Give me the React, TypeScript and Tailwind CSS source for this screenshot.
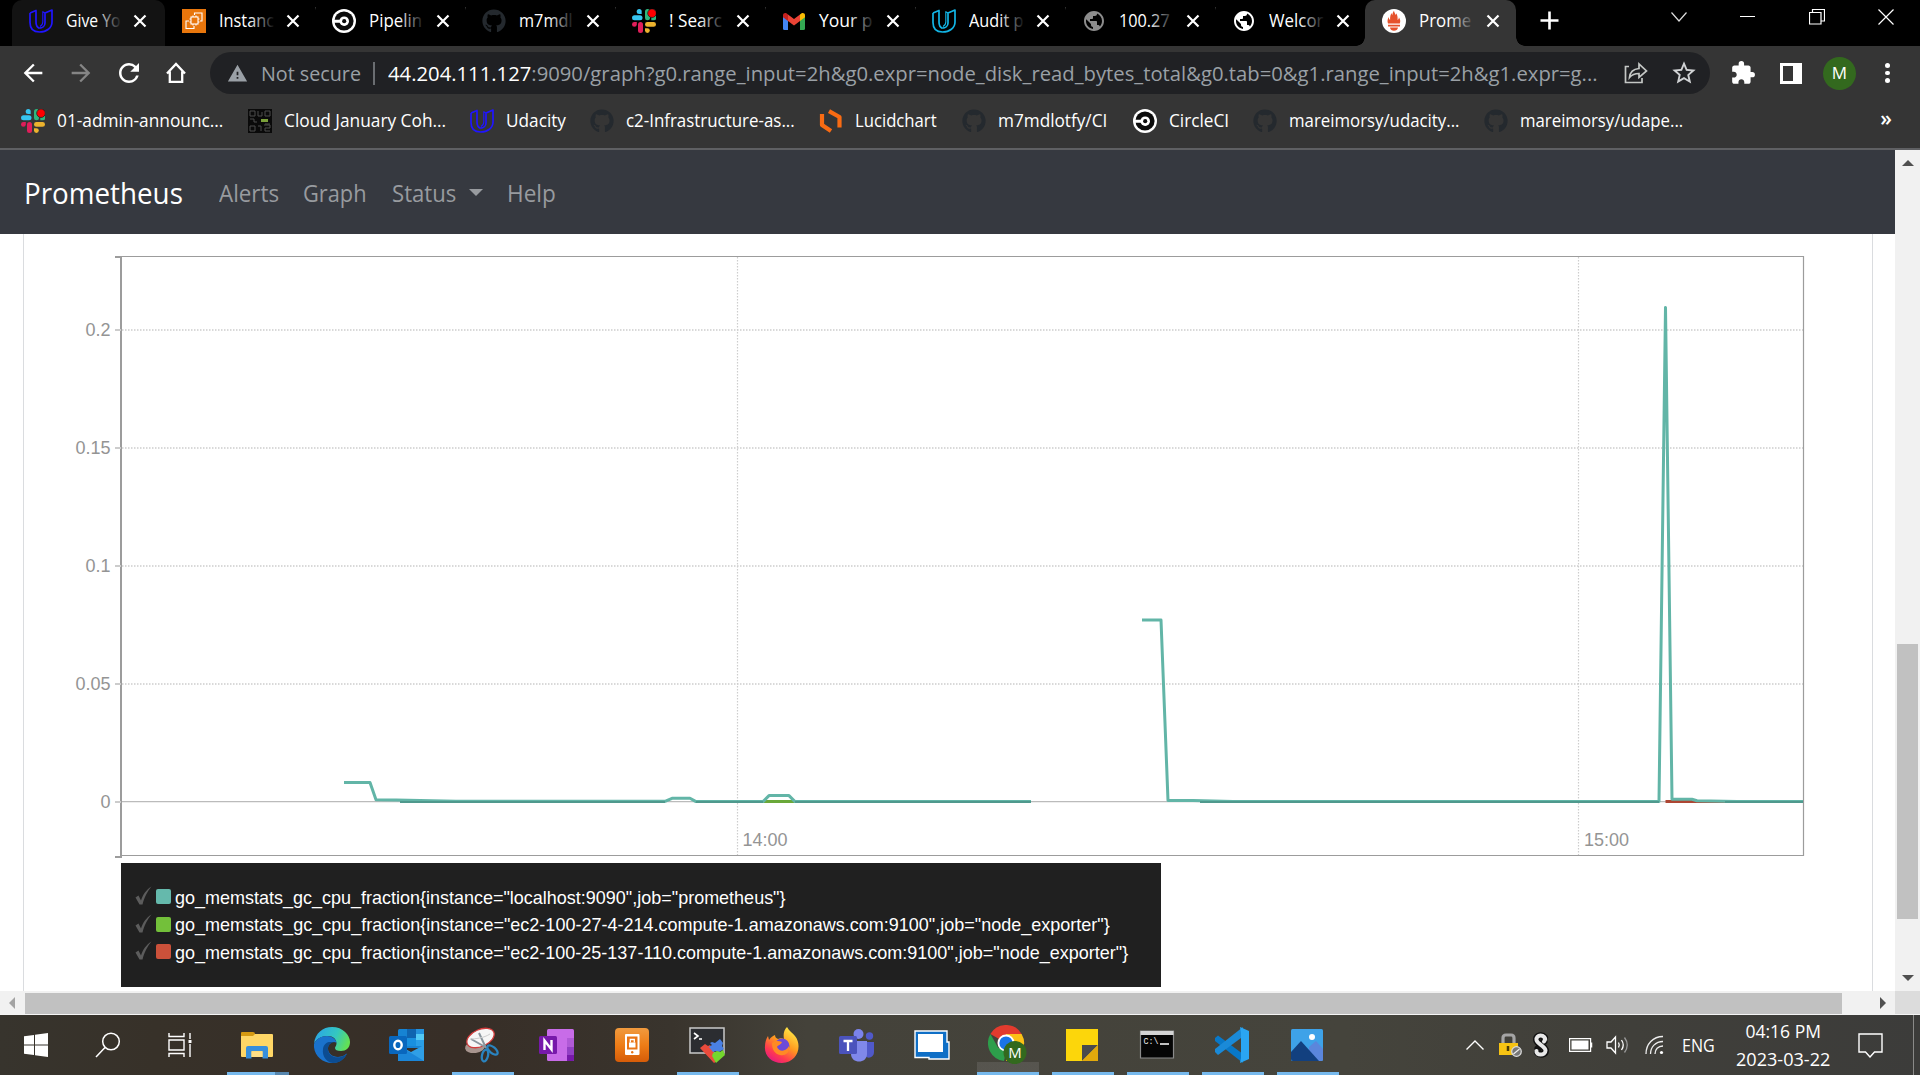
import { useLayoutEffect, useRef, type ReactNode } from "react";
import { FaGithub } from "react-icons/fa";
import { MdArrowBack, MdArrowForward, MdExtension, MdPublic, MdRefresh, MdStarBorder, MdWarning } from "react-icons/md";

/* A single line of text condensed or expanded to the width of its box. */
function Fit({ className, children }: { className: string; children: ReactNode }) {
  const box = useRef<HTMLSpanElement>(null);
  const text = useRef<HTMLSpanElement>(null);
  useLayoutEffect(() => {
    if (!box.current || !text.current) return;
    const ratio = box.current.offsetWidth / text.current.offsetWidth;
    text.current.style.transform = `scaleX(${ratio})`;
  }, []);
  return (
    <span ref={box} className={`block shrink-0 whitespace-nowrap ${className}`}>
      <span ref={text} className="inline-block origin-left">
        {children}
      </span>
    </span>
  );
}

function Udacity({ color }: { color: string }) {
  return (
    <svg className="h-6 w-6" viewBox="0 0 24 24" fill="none" stroke={color} strokeWidth="1.7" strokeLinejoin="round">
      <path d="M1 4 7 1.500V13c0 3 .6 5 3.200 6.200" />
      <path d="M1 4v9.500C1 19.500 4.500 23 10.500 23c7 0 12.500-4 12.500-10V1L16 4v10c0 3-2.500 5.200-5.800 5.200" />
      <path d="M16 4l-2.200-1.300V13c0 2-1 3.500-2.800 4.500" strokeWidth="1.100" />
    </svg>
  );
}

function Slack() {
  return (
    <svg className="h-6 w-6" viewBox="0 0 24 24">
      <g fill="#36c5f0"><path d="M7.200 0a2.500 2.500 0 0 1 2.500 2.500V5H7.200a2.500 2.500 0 0 1 0-5Z" /><rect y="6.300" width="10.500" height="5" rx="2.500" /></g>
      <g fill="#2eb67d"><rect x="13" y="0" width="5" height="11.300" rx="2.500" /><path d="M19.300 11.300V8.800a2.500 2.500 0 1 1 2.400 2.500Z" /></g>
      <g fill="#ecb22e"><rect x="13" y="13" width="11" height="4.800" rx="2.400" /><path d="M13 19.200h2.400a2.400 2.400 0 1 1-2.400 2.400Z" /></g>
      <g fill="#e01e5a"><rect x="6" y="13" width="5" height="11" rx="2.500" /><path d="M4.800 13v2.400A2.400 2.400 0 1 1 2.400 13Z" /></g>
      <circle cx="20" cy="4.200" r="4.300" fill="#f00" stroke="#222" strokeWidth=".8" />
    </svg>
  );
}

function CircleCi() {
  return (
    <svg className="h-6 w-6" viewBox="0 0 24 24">
      <circle cx="12" cy="12" r="12" fill="#fff" />
      <circle cx="12" cy="12" r="9.600" fill="#0c0c0c" />
      <path d="M1 10.700h7.500a4 4 0 1 1 0 3H1Z" fill="#fff" />
      <circle cx="12.200" cy="12.200" r="4.800" fill="#fff" />
      <circle cx="12.200" cy="12.200" r="2.100" fill="#0c0c0c" />
    </svg>
  );
}

function Gmail() {
  return (
    <svg className="h-[17px] w-[22px]" viewBox="0 0 22 17">
      <path d="M0 2v13.500A1.500 1.500 0 0 0 1.500 17H5V7Z" fill="#4285f4" />
      <path d="M22 2v13.500a1.500 1.500 0 0 1-1.500 1.500H17V7Z" fill="#34a853" />
      <path d="M17 1.500V8l5-3.700V2.200C22 .3 19.800-.6 18.300.500Z" fill="#fbbc04" />
      <path d="M0 2.200v2.100L5 8V1.500L3.700.500C2.200-.6 0 .3 0 2.200Z" fill="#c5221f" />
      <path d="M5 1.500V8l6 4.500L17 8V1.500L11 6Z" fill="#ea4335" />
    </svg>
  );
}

function Ec2() {
  return (
    <svg className="h-6 w-6" viewBox="0 0 24 24">
      <rect width="24" height="24" fill="#e8760c" />
      <g fill="none" stroke="#fff" strokeWidth="1.100">
        <rect x="9" y="8" width="7" height="7" />
        <path d="M7 12H4v7.500h8V17M12.500 6V4H20v8h-2M11 8V6.500M14 8V6.500M11 15v1.500M14 15v1.500M9 10H7.500M9 13H7.500M16 10h1.500M16 13h1.500" />
      </g>
    </svg>
  );
}

function Torch() {
  return (
    <svg className="h-6 w-6" viewBox="0 0 24 24">
      <circle cx="12" cy="12" r="12" fill="#fff" />
      <path d="M6 14.500C5 12 5.800 10 6.600 8c.3 1.600.7 2.500 1.500 3C8 7.500 8.500 5.500 9.700 4c0 1 .2 1.700.6 2.200C10.500 4.500 11 3 12 1.800c.2 1.800 1.300 2.700 1.600 4.200.4-.5.500-1 .5-1.700 1.400 1.700 1.700 4.200 1.500 6.700.9-.6 1.200-1.500 1.300-2.800 1.500 2.300 1.700 4.300.9 6.300ZM6 15.700h12v1.800H6ZM8 18.600h8c-.3 2.200-2 3.200-4 3.200s-3.700-1-4-3.200Z" fill="#e6522c" />
    </svg>
  );
}

function Close() {
  return (
    <svg className="h-[14px] w-[14px] shrink-0" viewBox="0 0 14 14" stroke="#fff" strokeWidth="2.200">
      <path d="m1.500 1.500 11 11m0-11-11 11" />
    </svg>
  );
}

const tabs: { icon: ReactNode; label: string; width: string; fade: string }[] = [
  { icon: <Udacity color="#2015ff" />, label: "Give Yo", width: "w-[55px]", fade: "to-[#131313]" },
  { icon: <Ec2 />, label: "Instanc", width: "w-[55px]", fade: "to-black" },
  { icon: <CircleCi />, label: "Pipelin", width: "w-[53px]", fade: "to-black" },
  { icon: <FaGithub className="h-6 w-6 text-[#24292e]" />, label: "m7mdl", width: "w-[54px]", fade: "to-black" },
  { icon: <Slack />, label: "! Searc", width: "w-[53px]", fade: "to-black" },
  { icon: <Gmail />, label: "Your p", width: "w-[53px]", fade: "to-black" },
  { icon: <Udacity color="#12b5e5" />, label: "Audit p", width: "w-[54px]", fade: "to-black" },
  { icon: <MdPublic className="h-[26px] w-[26px] text-[#8c8c8c]" />, label: "100.27", width: "w-[51px]", fade: "to-black" },
  { icon: <MdPublic className="h-[26px] w-[26px] text-white" />, label: "Welcor", width: "w-[54px]", fade: "to-black" },
  { icon: <Torch />, label: "Prome", width: "w-[52px]", fade: "to-[#353535]" },
];

function TabStrip() {
  return (
    <div className="flex h-[46px] bg-black pl-[12px]">
      {tabs.map((tab, i) => {
        const active = i === 9;
        const lit = active ? "bg-[#353535]" : i === 0 ? "bg-[#131313]" : "bg-black";
        return (
          <div key={tab.label} className={`relative flex h-[46px] shrink-0 items-start rounded-t-[10px] pt-2 pl-[18px] ${i === 0 ? "w-[153px]" : active ? "w-[151px]" : "w-[150px]"} ${lit}`}>
            <div className="-ml-px flex h-[26px] w-[24px] shrink-0 items-center justify-center">{tab.icon}</div>
            <div className="relative ml-[13px] h-[26px] w-[56px] shrink-0 text-[17.500px] leading-[25px] text-white">
              <Fit className={tab.width}>{tab.label}</Fit>
              <div className={`absolute top-0 right-0 h-full w-[26px] bg-gradient-to-r from-transparent ${tab.fade}`} />
            </div>
            <div className="ml-[11px] flex h-[25px] items-center"><Close /></div>
            {i > 0 && i < 8 ? <div className="absolute top-[7px] right-0 h-[29px] w-px translate-x-px bg-[#555]" /> : null}
            {active && (
              <>
                <div className="absolute bottom-0 -left-[9px] h-[9px] w-[9px] bg-[radial-gradient(circle_at_0_0,#000_8.500px,#353535_9px)]" />
                <div className="absolute -right-[9px] bottom-0 h-[9px] w-[9px] bg-[radial-gradient(circle_at_100%_0,#000_8.500px,#353535_9px)]" />
              </>
            )}
          </div>
        );
      })}
      <svg className="mt-[11px] ml-[24px] h-[19px] w-[19px]" viewBox="0 0 19 19" stroke="#fff" strokeWidth="2.600"><path d="M9.500.500v18M.500 9.500h18" /></svg>
      <div className="ml-auto flex h-[33px] items-center">
        <div className="flex w-[68px] justify-center"><svg className="h-[10px] w-[16px]" viewBox="0 0 16 10" fill="none" stroke="#ddd" strokeWidth="1.200"><path d="m.500.500 7.500 8.500L15.500.500" /></svg></div>
        <div className="flex w-[69px] justify-center"><div className="h-px w-[15px] bg-white" /></div>
        <div className="flex w-[69px] justify-center"><svg className="h-[16px] w-[16px]" viewBox="0 0 16 16" fill="none" stroke="#fff" strokeWidth="1.200"><path d="M.500 3.500h11.500v11.500H.500ZM3.500 3.500v-3h12v11.500h-3.500" /></svg></div>
        <div className="flex w-[69px] justify-center"><svg className="h-[16px] w-[16px]" viewBox="0 0 16 16" stroke="#fff" strokeWidth="1.200"><path d="m.500.500 15 15m0-15-15 15" /></svg></div>
      </div>
    </div>
  );
}

function Toolbar() {
  return (
    <div className="flex h-[54px] items-center pl-[21px]">
      <MdArrowBack className="mr-[20px] -ml-[2px] h-[28px] w-[28px] text-white" />
      <MdArrowForward className="mr-[19px] h-[28px] w-[28px] text-[#858585]" />
      <MdRefresh className="mr-[22px] h-[30px] w-[30px] text-white" />
      <svg className="h-[22px] w-[20px]" viewBox="0 0 20 22" fill="none" stroke="#fff" strokeWidth="2.300"><path d="M1 11.500 10 2l9 9.500M3.800 9.500v10.300h12.400V9.500" /></svg>
      <div className="ml-[24px] flex h-[42px] w-[1500px] shrink-0 items-center rounded-full bg-[#202124] pl-[17px] text-[20.500px] text-[#9aa0a6]">
        <MdWarning className="h-[21px] w-[21px] shrink-0 text-[#9aa0a6]" />
        <Fit className="ml-[13px] w-[100px]">Not secure</Fit>
        <div className="ml-[12px] h-[23px] w-[1.500px] bg-[#6a6d71]" />
        <Fit className="ml-[13px] w-[1210px]">
          <span className="text-white">44.204.111.127</span>:9090/graph?g0.range_input=2h&amp;g0.expr=node_disk_read_bytes_total&amp;g0.tab=0&amp;g1.range_input=2h&amp;g1.expr=g...
        </Fit>
        <svg className="ml-[26px] h-[22px] w-[24px] shrink-0" viewBox="0 0 24 22" fill="none" stroke="#c4c7c5" strokeWidth="1.700"><path d="M5 4.500H1.500v16H18V16M5.500 15.500C6 10 9 7 15 6.500V2l7.500 7-7.500 6.500V11.500C11 11.500 8 12.500 5.500 15.500Z" /></svg>
        <MdStarBorder className="ml-[22px] h-[28px] w-[28px] shrink-0 text-[#d0d2d4]" />
      </div>
      <MdExtension className="ml-[20px] h-[26px] w-[26px] text-white" />
      <div className="ml-[24px] h-[21px] w-[22px] border-[3px] border-r-[9px] border-white" />
      <div className="ml-[21px] flex h-[33px] w-[33px] items-center justify-center rounded-full bg-[#33691e] text-[17px] text-white">M</div>
      <div className="ml-[29px] flex flex-col gap-[3px]">
        <div className="h-[4.500px] w-[4.500px] rounded-full bg-white" />
        <div className="h-[4.500px] w-[4.500px] rounded-full bg-white" />
        <div className="h-[4.500px] w-[4.500px] rounded-full bg-white" />
      </div>
    </div>
  );
}

function Qr() {
  return (
    <svg className="h-6 w-6" viewBox="0 0 24 24">
      <rect width="24" height="24" fill="#0a0a0a" />
      <g fill="none" stroke="#4c4c4c" strokeWidth="1"><path d="M2 2h5v5H2ZM17 2h5v5h-5ZM2 17h5v5H2ZM10 2v5h4V3M2 10h4v3h3M10 17h3v5M16 16h6v3h-5v3h5M17 15h5" /></g>
      <rect x="13" y="10" width="7" height="3" fill="#7ba03a" />
    </svg>
  );
}

function Lucid() {
  return (
    <svg className="h-6 w-[24px]" viewBox="0 0 24 24" fill="none" stroke="#f96b13" strokeWidth="4.200" strokeLinejoin="round">
      <path d="M3 5v11l9 6M10 2.200 20.500 8v10.500" />
    </svg>
  );
}

const gh = <FaGithub className="h-6 w-6 text-[#24292e]" />;
const bookmarks: { icon: ReactNode; label: string; width: string }[] = [
  { icon: <Slack />, label: "01-admin-announc...", width: "w-[166px] mr-[25px]" },
  { icon: <Qr />, label: "Cloud January Coh...", width: "w-[162px] mr-[24px]" },
  { icon: <Udacity color="#2015ff" />, label: "Udacity", width: "w-[60px] mr-[24px]" },
  { icon: gh, label: "c2-Infrastructure-as...", width: "w-[169px] mr-[24px]" },
  { icon: <Lucid />, label: "Lucidchart", width: "w-[82px] mr-[25px]" },
  { icon: gh, label: "m7mdlotfy/CI", width: "w-[109px] mr-[26px]" },
  { icon: <CircleCi />, label: "CircleCI", width: "w-[60px] mr-[24px]" },
  { icon: gh, label: "mareimorsy/udacity...", width: "w-[171px] mr-[24px]" },
  { icon: gh, label: "mareimorsy/udape...", width: "w-[163px]" },
];

function Bookmarks() {
  return (
    <div className="flex h-[48px] items-center pr-[28px] pb-[6px] pl-[21px] text-[17.500px] text-white">
      {bookmarks.map((b) => (
        <div key={b.label} className="flex items-center">
          <div className="mr-[12px] flex w-6 justify-center">{b.icon}</div>
          <Fit className={`-mt-[2px] ${b.width}`}>{b.label}</Fit>
        </div>
      ))}
      <span className="-mt-[5px] ml-auto text-[21px] leading-none font-semibold">»</span>
    </div>
  );
}

const yTicks = [
  { y: 330, label: "0.2" },
  { y: 448, label: "0.15" },
  { y: 566, label: "0.1" },
  { y: 684, label: "0.05" },
];

function Chart() {
  return (
    <svg className="block h-[604px] w-[1700px]" viewBox="56 256 1700 604" overflow="visible">
      <g stroke="#cdcdcd" strokeDasharray="1.500 1.500" strokeWidth="1.500">
        {yTicks.map((t) => (
          <path key={t.label} d={`M122 ${t.y}H1803`} />
        ))}
        <path d="M737.500 257V855M1578.500 257V855" strokeWidth="1.200" />
      </g>
      <path d="M122 801.700H1803" stroke="#bbb" strokeWidth="1.300" />
      <path d="M121 256.500H1803.500V855.500H121" fill="none" stroke="#9c9c9c" strokeWidth="1.200" />
      <path d="M115 257H121V857H115" fill="none" stroke="#9c9c9c" strokeWidth="2" />
      <path d="M115 330h6M115 448h6M115 566h6M115 684h6M115 802h6" stroke="#ccc" strokeWidth="2" />
      <g fill="#949494" fontFamily="Liberation Sans" fontSize="18" textAnchor="end">
        {yTicks.map((t) => (
          <text key={t.label} x="110.500" y={t.y + 6}>{t.label}</text>
        ))}
        <text x="110.500" y="808">0</text>
      </g>
      <g fill="#949494" fontFamily="Liberation Sans" fontSize="18">
        <text x="742.500" y="846">14:00</text>
        <text x="1584" y="846">15:00</text>
      </g>
      <g fill="none" strokeWidth="3" strokeLinejoin="round">
        <path d="M763 801.600H796" stroke="#6aa839" />
        <path d="M1665.500 801.600H1735" stroke="#ad4633" />
        <path d="M344 782.500h26L376 799.800l20 .2 60 1.300H665l7-3h18l6 3.300h67l6-6h20l6 6h236M1142 620h19l7 180.500h25l40 1.100h426L1665.500 307.500 1672 799.300h20l5 1.500 40 .7h66" stroke="#62b5a7" />
        <path d="M400 802H665M696 802h67M795 802h236M1200 802h459M1725 802h78" stroke="#4f998d" strokeWidth="2" />
      </g>
    </svg>
  );
}

const series = [
  { color: "bg-[#65b9ac]", label: 'go_memstats_gc_cpu_fraction{instance="localhost:9090",job="prometheus"}', width: "w-[611px]" },
  { color: "bg-[#73c03a]", label: 'go_memstats_gc_cpu_fraction{instance="ec2-100-27-4-214.compute-1.amazonaws.com:9100",job="node_exporter"}', width: "w-[935px] pb-px" },
  { color: "bg-[#cb513a]", label: 'go_memstats_gc_cpu_fraction{instance="ec2-100-25-137-110.compute-1.amazonaws.com:9100",job="node_exporter"}', width: "w-[953px]" },
];

function Legend() {
  return (
    <div className="mt-[3px] ml-[65px] flex h-[124px] w-[1040px] flex-col bg-[#202020] pt-[21px] pl-[14px] font-['Liberation_Sans',sans-serif] text-[17.800px] text-white">
      {series.map((s) => (
        <div key={s.label} className="flex h-[27.700px] items-center">
          <svg className="-mt-[5px] h-[19px] w-[17px]" viewBox="0 0 17 19"><path d="M.500 11.500 3.500 9.500l2.500 5C8 8.500 11 4 16.500.500 12 6 9.500 11 7.500 18.500H4.500Z" fill="#5c5c5c" /></svg>
          <div className={`-mt-[3px] ml-[4px] h-[15px] w-[15px] rounded-[2px] ${s.color}`} />
          <Fit className={`mt-px ml-[4px] ${s.width}`}>{s.label}</Fit>
        </div>
      ))}
    </div>
  );
}

function PrometheusPage() {
  return (
    <div className="flex h-[841px] w-[1895px] flex-col bg-white">
      <nav className="flex h-[84px] shrink-0 items-center bg-[#363940] pt-[3px] pl-[24px] text-[23.500px] text-[#989b9f]">
        <Fit className="mr-[36px] -mt-px w-[159px] text-[29px] text-white">Prometheus</Fit>
        <Fit className="mr-[24px] w-[60px]">Alerts</Fit>
        <Fit className="mr-[25px] w-[64px]">Graph</Fit>
        <Fit className="w-[64px]">Status</Fit>
        <div className="-mt-[3px] mr-[24px] ml-[13px] h-0 w-0 border-x-[7px] border-t-[7px] border-x-transparent border-t-[#989b9f]" />
        <Fit className="w-[49px]">Help</Fit>
      </nav>
      <div className="mr-[22px] ml-[23px] h-[757px] border-x border-[#dadcdf] pt-[22px] pl-[32px]">
        <Chart />
        <Legend />
      </div>
    </div>
  );
}

function VerticalScroll() {
  return (
    <div className="flex h-[841px] w-[25px] flex-col items-center bg-[#f1f1f1]">
      <div className="mt-[10px] h-0 w-0 border-x-[6px] border-b-[6px] border-x-transparent border-b-[#505050]" />
      <div className="mt-[478px] h-[275px] w-[21px] bg-[#c1c1c1]" />
      <div className="mt-[56px] h-0 w-0 border-x-[6px] border-t-[6px] border-x-transparent border-t-[#505050]" />
    </div>
  );
}

function HorizontalScroll() {
  return (
    <div className="flex h-[24px] items-center border-b border-[#f5f5f5] bg-[#f1f1f1]">
      <div className="ml-[9px] h-0 w-0 border-y-[6px] border-r-[6px] border-y-transparent border-r-[#a3a3a3]" />
      <div className="mt-[2px] ml-[10px] h-[21px] w-[1817px] bg-[#c1c1c1]" />
      <div className="ml-[38px] h-0 w-0 border-y-[6px] border-l-[6px] border-y-transparent border-l-[#505050]" />
      <div className="ml-auto h-full w-[25px] bg-[#dcdcdc]" />
    </div>
  );
}

const art = "h-9 w-9 block";
const explorer = (
  <svg className={art} viewBox="0 0 36 36"><path d="M2 6q0-1 1-1h11q2 0 2 2v3H2Z" fill="#d69a12" /><path d="M2 9h12l2-2h17q1 0 1 1v21q0 1-1 1H3q-1 0-1-1Z" fill="#ffd766" /><path d="M7 21q0-2 2-2h18q2 0 2 2v10.500h-5.500V24h-11v7.500H7Z" fill="#378fdc" /><path d="M12.500 24.500h11V30h-11Z" fill="#ffdf86" /></svg>
);
const edge = (
  <svg className={art} viewBox="0 0 36 36">
    <defs>
      <linearGradient id="edgeTop" x1="0" x2="1" y1=".2" y2=".5"><stop stopColor="#2aa4e8" /><stop offset=".6" stopColor="#34c7c0" /><stop offset="1" stopColor="#63e154" /></linearGradient>
    </defs>
    <path d="M0 17C1 6 9 0 18 0c11 0 18 8 18 15 0 6-4 9-9 9-4 0-6-1-6-3 0-1.500 1.500-2 1.500-4.500C22.500 12 19 9 14 9 7 9 2 12 0 17Z" fill="url(#edgeTop)" />
    <path d="M0 17c2-5 7-8 13-8 6 0 9.500 4 9.500 7-2-2-8-1-8.500 5-.4 7 7 10 13 8.500 3-.6 4-2 6-3C30 33 24 36 18 36 8 36-1 28 0 17Z" fill="#1a72cc" />
    <path d="M14 21c-.5 8 8 11 14 8.500 3-1 4-2 5-3C30 33 25 36 19 36 12 35 8 29 9 22c.5-4 3-6.500 6-7 2 0 4 0 6.500 1-4-1-7 1-7.500 5Z" fill="#0c4c91" />
  </svg>
);
const outlook = (
  <svg className={art} viewBox="0 0 36 36"><path d="M9 3.500Q9 2 10.500 2H34q1 0 1 1v18H9Z" fill="#1683d3" /><path d="M18 2h9v9h-9Z" fill="#0f64b0" /><path d="M27 2h8v5h-8Z" fill="#2492dd" /><path d="M27 7h8v6h-8Z" fill="#52c9f5" /><path d="M18 11h9v8h-9Z" fill="#1990df" /><path d="M27 13h8v6h-8Z" fill="#2a9fe6" /><path d="M9 34h26V18L22 25 9 18Z" fill="#2f9fe6" /><path d="m9 18 26 16H9Z" fill="#1b86d8" /><rect y="9" width="18" height="18" rx="1.500" fill="#0967bd" /><ellipse cx="9" cy="18" rx="3.700" ry="4.300" fill="none" stroke="#fff" strokeWidth="2.400" /></svg>
);
const snip = (
  <svg className={art} viewBox="0 0 36 36"><ellipse cx="11" cy="20" rx="10" ry="6" fill="#a8958f" transform="rotate(-8 11 20)" /><ellipse cx="16.500" cy="11" rx="14.500" ry="8.500" fill="#f6f6f6" stroke="#d23c3c" strokeWidth="1.300" transform="rotate(-24 16.500 11)" /><path d="M15 6 22 21M7 12l16 9" stroke="#8a959d" strokeWidth="2" /><path d="M6 12c5 0 14-1 20-5" stroke="#ccc" fill="none" /><g fill="none" stroke="#2a83bf" strokeWidth="2.300"><ellipse cx="21" cy="28.500" rx="3" ry="6" transform="rotate(14 21 28.500)" /><ellipse cx="28.500" cy="23" rx="3" ry="6.300" transform="rotate(-50 28.500 23)" /></g></svg>
);
const onenote = (
  <svg className={art} viewBox="0 0 36 36"><rect x="8" y="2" width="27" height="32" rx="1.500" fill="#c86ce8" /><path d="M28 11h7v9h-7Z" fill="#b05ad6" /><path d="M28 20h7v8h-7Z" fill="#9240c4" /><path d="M28 28h7v5q0 1-1 1h-6Z" fill="#7719aa" /><rect y="9" width="18" height="18" rx="1.500" fill="#7719aa" /><path d="M5.500 23V13.500l7 9V13" fill="none" stroke="#fff" strokeWidth="2.400" /></svg>
);
const vault = (
  <svg className={art} viewBox="0 0 36 36">
    <defs><linearGradient id="vaultBg" x1="0" x2="0" y1="0" y2="1"><stop stopColor="#f09a3e" /><stop offset=".5" stopColor="#ee7d17" /><stop offset="1" stopColor="#d65c08" /></linearGradient></defs>
    <rect x="1" y="1" width="34" height="34" rx="4" fill="url(#vaultBg)" /><rect x="11" y="7" width="14.500" height="21" rx="1" fill="#fff" /><path d="M13 9.500h10.500v13H13Z" fill="#e87415" /><rect x="15" y="15.500" width="6.500" height="5" fill="#fff" /><path d="M16.300 15.500v-3h4v3" fill="none" stroke="#fff" strokeWidth="1.300" /><circle cx="18.200" cy="25.300" r="1.200" fill="#e87415" /></svg>
);
const moba = (
  <svg className={art} viewBox="0 0 36 36"><path d="M1 1h34v25H1Z" fill="#2b2d31" stroke="#c9c9c9" strokeWidth="1.500" /><path d="m5 6 4 3-4 3M10 12h3" fill="none" stroke="#fff" strokeWidth="1.600" /><path d="m11 21 5-4 3 2 2-1 4 5v5l3 6-3 2Z" fill="#ea4b3c" /><path d="m21 16 2-1 3 1 5-4 3 4-1 3 2 3-5 3-3-1-3 1-4-5 3-2Z" fill="#4a80e4" /><path d="m24 26 4-2 3 1 3-2 2 5-9 8-4-7Z" fill="#74d62d" /></svg>
);
const firefox = (
  <svg className={art} viewBox="0 0 36 36">
    <defs><linearGradient id="fox" x1=".8" x2=".2" y1="0" y2="1"><stop stopColor="#fff04a" /><stop offset=".45" stopColor="#ff981f" /><stop offset=".75" stopColor="#ff3a50" /><stop offset="1" stopColor="#e31587" /></linearGradient></defs>
    <path d="M23 0c2 4 6 6 8 9 8 10 2 27-13 27C7 36 0 28 1 19c.2-4 1-7 3-10l1 4C7 10 9 9 11 8c0 2 1 3 3 4 2-1 4-1 6 0-1-5 0-9 3-12Z" fill="url(#fox)" />
    <circle cx="18" cy="19" r="7.500" fill="#6d4bd8" /><path d="M8 16c3-3 7-2 10-1-1 3-4 3-5 5 2 5 9 5 12-1 1 8-5 10-9 9-5-1-8-5-8-12Z" fill="#ff8a24" />
  </svg>
);
const teams = (
  <svg className={art} viewBox="0 0 36 36"><circle cx="19.500" cy="7" r="5" fill="#7b83eb" /><circle cx="30.500" cy="9" r="3.700" fill="#5059c9" /><path d="M25 15h10v10c0 7-10 8-10 0Z" fill="#5059c9" /><path d="M12 14h16v13c0 10-16 10-16 0Z" fill="#8088ea" /><rect y="9" width="18" height="18" rx="1.500" fill="#4b53bc" /><path d="M4.500 14h9M9 14v10" stroke="#fff" strokeWidth="2.300" /></svg>
);
const sandbox = (
  <svg className={art} viewBox="0 0 36 36"><path d="M1 4h32v11h2v17H15v-1.500H1Z" fill="#0f6fc6" stroke="#fff" strokeWidth="1.400" /><path d="M4 7h25v18H4Z" fill="#fff" /></svg>
);
const chrome = (
  <svg className="block h-[39px] w-[39px]" viewBox="0 0 39 39"><path d="M18 18 2.400 9A18 18 0 0 1 33.600 9Z" fill="#e33b2e" /><path d="M18 18V9h15.600A18 18 0 0 1 18 36Z" fill="#fbc116" /><path d="M2.400 9 10 22.500l8 4.500-2 9A18 18 0 0 1 2.400 9Z" fill="#2d9e4b" /><circle cx="18" cy="18" r="8.500" fill="#fff" /><circle cx="18" cy="18" r="6.600" fill="#1a73e8" /><circle cx="27" cy="27.500" r="11.500" fill="#33691e" /><text x="27" y="33" textAnchor="middle" fill="#fff" fontSize="15" fontFamily="Open Sans">M</text></svg>
);
const sticky = (
  <svg className={art} viewBox="0 0 36 36"><path d="M2 2h32v32H2Z" fill="#fcd60b" /><path d="M18 18h16L18 34Z" fill="#494a4c" /><path d="M34 18v16H18Z" fill="#e2a90c" /></svg>
);
const cmd = (
  <svg className={art} viewBox="0 0 36 36"><path d="M1.500 4h33v27h-33Z" fill="#050505" stroke="#8b8b8b" strokeWidth="1.200" /><path d="M1.500 4h33v4h-33Z" fill="#d4d4d4" /><text x="4.500" y="17" fill="#eee" fontFamily="Liberation Mono" fontSize="9" textLength="15" lengthAdjust="spacingAndGlyphs">C:\</text><path d="M21 17h9" stroke="#fff" strokeWidth="1.500" /></svg>
);
const vscode = (
  <svg className={art} viewBox="0 0 36 36"><path d="M1 11 4 8.500 29 27V36L1 14Z" fill="#0878c8" /><path d="M1 25 4 28 29 9.500V0L1 22Z" fill="#1a8ad8" /><path d="m26 0 9 4v28l-9 4 1-5V6Z" fill="#2aa5f2" /></svg>
);
const photos = (
  <svg className={art} viewBox="0 0 36 36"><rect x="2" y="2" width="32" height="32" rx="1.500" fill="#3ea2e8" /><path d="M20 20 27 14l7 8v10a2 2 0 0 1-2 2H20Z" fill="#5b86dc" /><path d="M2 25 12 14l18 20H4a2 2 0 0 1-2-2Z" fill="#12407f" /><circle cx="23" cy="10" r="3" fill="#fff" /></svg>
);

const apps: { name: string; icon: ReactNode; open: boolean }[] = [
  { name: "explorer", icon: explorer, open: true },
  { name: "edge", icon: edge, open: false },
  { name: "outlook", icon: outlook, open: false },
  { name: "snip", icon: snip, open: true },
  { name: "onenote", icon: onenote, open: false },
  { name: "vault", icon: vault, open: false },
  { name: "moba", icon: moba, open: true },
  { name: "firefox", icon: firefox, open: false },
  { name: "teams", icon: teams, open: false },
  { name: "sandbox", icon: sandbox, open: false },
  { name: "chrome", icon: chrome, open: true },
  { name: "sticky", icon: sticky, open: true },
  { name: "cmd", icon: cmd, open: true },
  { name: "vscode", icon: vscode, open: true },
  { name: "photos", icon: photos, open: true },
];

function Taskbar() {
  return (
    <div className="flex h-[60px] items-stretch bg-[linear-gradient(90deg,#37342d_0,#373129_8%,#372e27_24%,#39342d_35%,#44423a_42%,#45443c_70%,#403f3a_85%,#3c3c3a_100%)] text-white">
      <div className="flex w-[72px] items-center justify-center">
        <svg className="h-[24px] w-[24px]" viewBox="0 0 24 24" fill="#fff"><path d="M0 3.300 10 2v9.400H0ZM11 1.800 24 0v11.400H11ZM0 12.500h10V22L0 20.700ZM11 12.500h13V24l-13-1.800Z" /></svg>
      </div>
      <div className="flex w-[72px] items-center justify-center">
        <svg className="h-[26px] w-[26px]" viewBox="0 0 26 26" fill="none" stroke="#fff" strokeWidth="1.500"><circle cx="16" cy="9.500" r="8.300" /><path d="M10 15.500 1 25" /></svg>
      </div>
      <div className="flex w-[72px] items-center justify-center">
        <svg className="h-[24px] w-[24px]" viewBox="0 0 24 24" fill="none" stroke="#fff" strokeWidth="1.400"><path d="M1 0v3.500h15V0M1 24v-3.500h15V24M1 7h15v10H1ZM22 0v6M22 11v13" /><path d="M20.500 7h3v3h-3Z" fill="#fff" stroke="none" /></svg>
      </div>
      <div className="ml-[4px] flex">
        {apps.map((a) => (
          <div key={a.name} className="flex w-[75px] flex-col items-center justify-end">
            <div className={`flex h-[57px] w-[62px] items-center justify-center ${a.name === "chrome" ? "bg-[linear-gradient(#0000_47px,#69676380_47px)] pt-[2px]" : "pr-px pb-px pt-[3px]"}`}>{a.icon}</div>
            <div className={`flex h-[3px] w-[62px] justify-end ${a.open ? "bg-[#76b9ed]" : ""}`}>
              {a.name === "explorer" && <div className="h-full w-[14px] bg-[#5686ae]" />}
            </div>
          </div>
        ))}
      </div>
      <div className="ml-auto flex items-center">
        <svg className="h-[10px] w-[18px]" viewBox="0 0 18 10" fill="none" stroke="#fff" strokeWidth="1.400"><path d="M.500 9.500 9 1l8.500 8.500" /></svg>
        <svg className="ml-[14px] h-[24px] w-[24px]" viewBox="0 0 24 24"><path d="M5 11V5q0-3 3-3h5q3 0 3 3v6" fill="none" stroke="#a5a5a5" strokeWidth="3.200" /><path d="M1 10h19v12H1Z" fill="#f6c313" /><path d="M10 13v5" stroke="#4a3b05" strokeWidth="2.500" /><circle cx="18.500" cy="18.500" r="4.800" fill="#777" stroke="#ddd" strokeWidth="1.200" /><path d="m15.500 21 6-5" stroke="#eee" strokeWidth="1.200" /></svg>
        <svg className="ml-[10px] h-[26px] w-[18px]" viewBox="0 0 18 26" fill="none" strokeLinecap="round"><path d="M12.500 5.500C10 2.500 4.500 3.500 4.500 7.500c0 4.500 9 6.500 9 11 0 4-5 5-8 2M12 9.500 10 11M6 16.500l2-1.500" stroke="#111" strokeWidth="7" /><path d="M12 9.500C15 6 11 3.500 8.500 3.500S4 5.500 4.500 8c.6 4 9 6 9 10.500 0 5.500-10 5-9 .500" stroke="#e8e8e8" strokeWidth="4" /></svg>
        <svg className="ml-[19px] h-[14px] w-[24px]" viewBox="0 0 24 14"><path d="M.600.600h21v12.800H.600Z" fill="none" stroke="#fff" strokeWidth="1.200" /><path d="M2.500 2.500h17v9h-17Z" fill="#fff" /><path d="M22.500 4.500v5" stroke="#fff" strokeWidth="1.500" /></svg>
        <svg className="ml-[13px] h-[20px] w-[24px]" viewBox="0 0 24 20" fill="none" stroke="#fff" strokeWidth="1.300"><path d="M1 7h4l4.500-5v16L5 13H1ZM12.500 7.500q1.500 2.500 0 5M15.500 5q3.500 5 0 10" /><path d="M18.500 2.500q5.500 7.500 0 15" stroke="#999" /></svg>
        <svg className="ml-[15px] h-[20px] w-[19px]" viewBox="0 0 19 20" fill="none" stroke="#eee" strokeWidth="1.300"><path d="M1 19C1 9 8 1.500 18 1.500M5.500 19c0-7 5-12.500 12.500-12.500M10 19c0-4.500 3-8 8-8" /><circle cx="16.500" cy="17.500" r="1.600" fill="#fff" stroke="none" /></svg>
        <Fit className="ml-[18px] w-[33px] text-[18px]">ENG</Fit>
        <div className="ml-[21px] flex h-full w-[94px] flex-col items-center pt-[2px] text-[17.500px] leading-[29px]">
          <Fit className="mb-[-1px] w-[75px]">04:16 PM</Fit>
          <Fit className="w-[94px]">2023-03-22</Fit>
        </div>
        <svg className="ml-[28px] h-[25px] w-[25px]" viewBox="0 0 25 25" fill="none" stroke="#fff" strokeWidth="1.400"><path d="M1 1h23v18h-7.500l-4.500 5-4.500-5H1Z" /></svg>
        <div className="mr-[6px] ml-[30px] h-[60px] w-px bg-[#8a8a88]" />
      </div>
    </div>
  );
}

export default function App() {
  return (
    <div className="flex h-[1075px] w-[1920px] flex-col overflow-hidden bg-white font-['Open_Sans','Noto_Sans',sans-serif]">
      <TabStrip />
      <div className="h-[104px] border-b-2 border-[#5f6063] bg-[#353535]">
        <Toolbar />
        <Bookmarks />
      </div>
      <div className="flex">
        <PrometheusPage />
        <VerticalScroll />
      </div>
      <HorizontalScroll />
      <Taskbar />
    </div>
  );
}
